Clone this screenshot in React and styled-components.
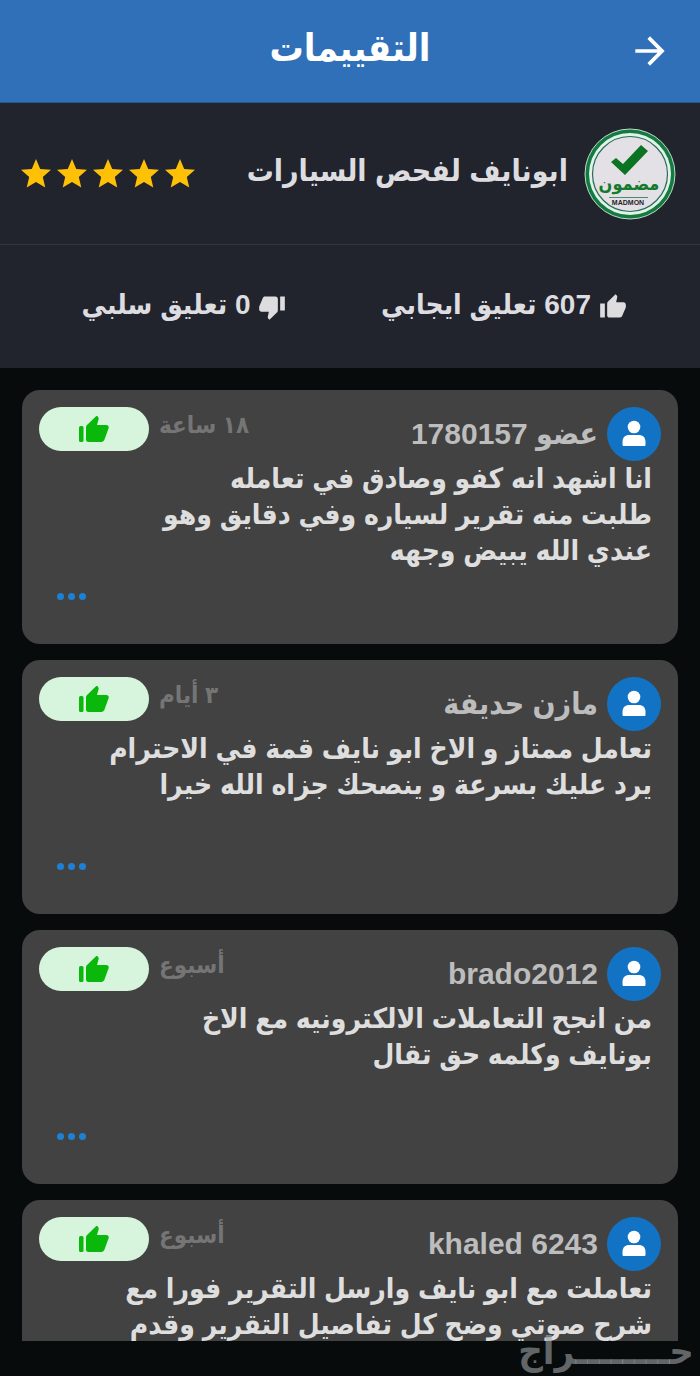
import styled, { createGlobalStyle } from "styled-components";
import { MdThumbUp, MdThumbDown, MdStar, MdArrowForward } from "react-icons/md";

const reviews = [
  {
    name: "عضو 1780157",
    time: "١٨ ساعة",
    text: "انا اشهد انه كفو وصادق في تعامله\nطلبت منه تقرير لسياره وفي دقايق وهو\nعندي الله يبيض وجهه",
  },
  {
    name: "مازن حديفة",
    time: "٣ أيام",
    text: "تعامل ممتاز و الاخ ابو نايف قمة في الاحترام\nيرد عليك بسرعة و ينصحك جزاه الله خيرا",
  },
  {
    name: "brado2012",
    time: "أسبوع",
    text: "من انجح التعاملات الالكترونيه مع الاخ\nبونايف وكلمه حق تقال",
  },
  {
    name: "khaled 6243",
    time: "أسبوع",
    text: "تعاملت مع ابو نايف وارسل التقرير فورا مع\nشرح صوتي وضح كل تفاصيل التقرير وقدم",
  },
];

function PersonIcon() {
  return (
    <svg width="24" height="28" viewBox="0 0 24 28" fill="currentColor">
      <circle cx="12" cy="7" r="6.300" />
      <path d="M.5 24.500v-2.500c0-4.500 2.500-7 7-7h9c4.500 0 7 2.500 7 7v2.500c0 1-.5 1.500-1.500 1.500H2c-1 0-1.500-.5-1.500-1.500z" />
    </svg>
  );
}

function LikeIcon() {
  return (
    <svg width="30" height="28" viewBox="0 0 30 28" fill="currentColor">
      <rect x="0" y="11" width="4.500" height="16" rx="1.500" />
      <path d="M7 12.500c0-1 .3-1.700 1-2.400L16.800 1.400c.5-.6 1.300-.6 1.900 0 .9.800 1.200 1.700.9 2.800L18 10h9.300c1.900 0 2.900 1.600 2.300 3.300l-4.100 11.200c-.6 1.600-1.600 2.500-3.300 2.500H9.500c-1.600 0-2.500-.9-2.500-2.500z" />
    </svg>
  );
}

function SellerLogo() {
  return (
    <Logo viewBox="0 0 92 92">
      <circle cx="46" cy="46" r="45" fill="#147a40" />
      <circle cx="46" cy="46" r="45" fill="none" stroke="#bcdcca" strokeWidth="1" />
      <circle cx="46" cy="46" r="41" fill="#dff3e8" />
      <circle cx="46" cy="46" r="37.500" fill="#e3e1e5" stroke="#2b6a58" strokeWidth="1.200" />
      <path d="M27 34l5-4 7 6 18-19 7 6-23 24z" fill="#0b7423" />
      <text x="45" y="62" fontSize="18" fontWeight="700" fill="#147a2c">
        مضمون
      </text>
      <path d="M25 69.500h39" stroke="#4d8a68" strokeWidth="1.200" />
      <text x="44" y="77" fontSize="7" fontWeight="700" fill="#252329">
        MADMON
      </text>
    </Logo>
  );
}

function Review({ name, time, text }) {
  return (
    <Card>
      <CardHead>
        <Avatar>
          <PersonIcon />
        </Avatar>
        <Name>{name}</Name>
        <Time>{time}</Time>
        <Vote>
          <LikeIcon />
        </Vote>
      </CardHead>
      <Message>{text}</Message>
      <More type="button" aria-label="المزيد">
        <i />
        <i />
        <i />
      </More>
    </Card>
  );
}

export default function App() {
  return (
    <Page dir="rtl" lang="ar">
      <GlobalStyle />
      <TopBar>
        <BackButton type="button" aria-label="رجوع">
          <MdArrowForward />
        </BackButton>
        <h1>التقييمات</h1>
      </TopBar>

      <Seller>
        <SellerLogo />
        <h2>ابونايف لفحص السيارات</h2>
        <Stars>
          <MdStar />
          <MdStar />
          <MdStar />
          <MdStar />
          <MdStar />
        </Stars>
      </Seller>

      <Totals>
        <Total>
          <MdThumbUp />
          <span>607 تعليق ايجابي</span>
        </Total>
        <Total>
          <MdThumbDown />
          <span>0 تعليق سلبي</span>
        </Total>
      </Totals>

      <List>
        {reviews.map((review) => (
          <Review key={review.name} {...review} />
        ))}
      </List>

      <Watermark>حــــــــراج</Watermark>
    </Page>
  );
}

const GlobalStyle = createGlobalStyle`
  * {
    box-sizing: border-box;
  }

  body {
    margin: 0;
    background: #080b0b;
  }

  h1, h2, h3, p {
    margin: 0;
  }

  button {
    border: 0;
    padding: 0;
    background: none;
    cursor: pointer;
  }
`;

const Page = styled.main`
  position: relative;
  display: flex;
  flex-direction: column;
  height: 100vh;
  padding-bottom: 35px;
  overflow: hidden;
  background: #080b0b;
  color: #dddde0;
  font-family: "Liberation Sans", "DejaVu Sans Condensed", "DejaVu Sans", sans-serif;
  font-weight: 700;
`;

const TopBar = styled.header`
  flex: none;
  display: grid;
  grid-template-columns: 44px 1fr 44px;
  align-items: center;
  height: 103px;
  padding: 0 28px;
  background: #3070b8;
  border-bottom: 1px solid #28558a;
  color: #fff;

  h1 {
    padding-bottom: 6px;
    font-size: 38px;
    line-height: 48px;
    text-align: center;
  }
`;

const BackButton = styled.button`
  display: flex;
  color: #fff;
  font-size: 44px;
`;

const Seller = styled.section`
  flex: none;
  display: flex;
  align-items: center;
  height: 142px;
  padding: 0 24px 0 18px;
  background: #21232d;
  border-bottom: 1px solid #343641;

  h2 {
    margin-right: 16px;
    padding-bottom: 6px;
    font-size: 30px;
    line-height: 40px;
    white-space: nowrap;
  }
`;

const Logo = styled.svg`
  flex: none;
  width: 92px;
  height: 92px;

  text {
    text-anchor: middle;
  }
`;

const Stars = styled.div`
  display: flex;
  margin-right: auto;
  color: #ffc107;
  font-size: 36px;
`;

const Totals = styled.section`
  flex: none;
  display: grid;
  grid-template-columns: 1fr 1fr;
  align-items: center;
  height: 123px;
  padding: 0 36px 0 24px;
  background: #21232d;
`;

const Total = styled.div`
  display: flex;
  align-items: center;
  justify-content: center;
  gap: 8px;
  font-size: 28px;
  line-height: 40px;
  white-space: nowrap;

  span {
    padding-bottom: 4px;
  }
`;

const List = styled.section`
  flex: 1;
  min-height: 0;
  display: flex;
  flex-direction: column;
  gap: 16px;
  padding: 22px 22px 0;
  overflow: hidden;
`;

const Card = styled.article`
  flex: none;
  display: flex;
  flex-direction: column;
  min-height: 254px;
  padding: 17px;
  border-radius: 18px;
  background: #424242;
`;

const CardHead = styled.div`
  display: flex;
  align-items: flex-start;
  height: 54px;
`;

const Avatar = styled.span`
  flex: none;
  display: grid;
  place-items: center;
  width: 54px;
  height: 54px;
  border-radius: 50%;
  background: #1273c4;
  color: #fff;
`;

const Name = styled.h3`
  margin-right: 9px;
  color: #bdbdbd;
  font-size: 30px;
  line-height: 54px;
`;

const Time = styled.span`
  margin: 0 auto 0 10px;
  color: #757575;
  font-size: 24px;
  line-height: 36px;
`;

const Vote = styled.span`
  display: grid;
  place-items: center;
  width: 110px;
  height: 44px;
  border-radius: 22px;
  background: #d6f5dc;
  color: #09b80b;
`;

const Message = styled.p`
  flex: 1;
  padding-right: 9px;
  color: #dedede;
  font-size: 28px;
  line-height: 36px;
  white-space: pre-line;
`;

const More = styled.button`
  display: flex;
  align-self: flex-end;
  gap: 4px;
  margin: 0 0 27px 18px;

  i {
    width: 7px;
    height: 7px;
    border-radius: 50%;
    background: #1e80d4;
  }
`;

const Watermark = styled.span`
  position: absolute;
  right: 6px;
  bottom: 6px;
  color: rgba(160, 165, 168, 0.6);
  font-size: 38px;
  line-height: 38px;
`;
